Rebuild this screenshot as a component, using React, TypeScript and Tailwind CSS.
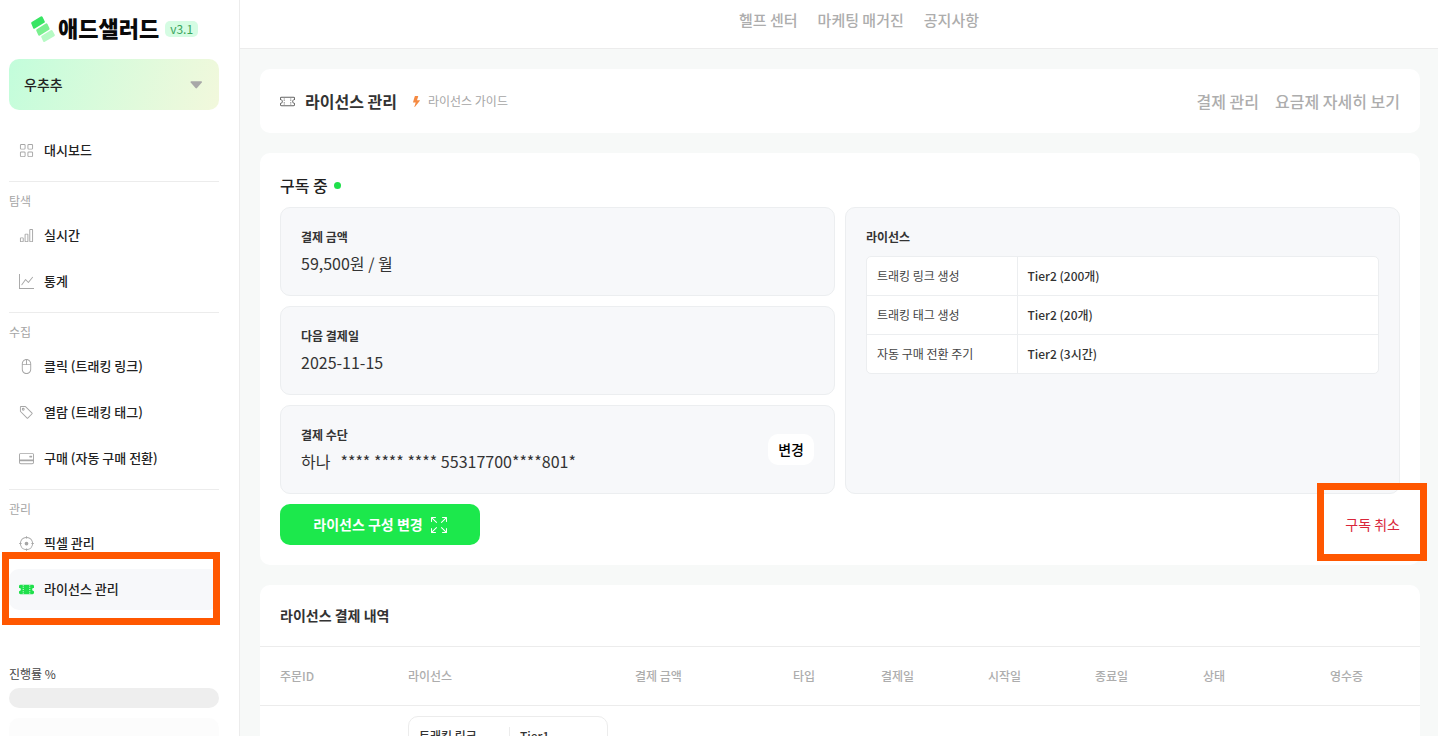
import type { ReactNode } from "react";
import {
  BsArrowsFullscreen,
  BsBarChart,
  BsCreditCard2Back,
  BsCrosshair,
  BsGraphUp,
  BsGrid,
  BsLightningFill,
  BsMouse2,
  BsTag,
  BsTicketPerforated,
  BsTicketPerforatedFill,
} from "react-icons/bs";

function LogoMark() {
  return (
    <svg width="24" height="26" viewBox="0 0 24 26" strokeWidth="2.4" strokeLinejoin="round" aria-hidden="true">
      <path d="M1.4 7 10.4 1.4 12.6 5.8 3.2 11.6Z" fill="#38e563" stroke="#38e563" />
      <path d="M6.4 14.2 15.4 8.6 17.4 12.8 8.2 18.4Z" fill="#7af08f" stroke="#7af08f" />
      <path d="M11.4 20.8 20.4 15.2 22.6 19.2 13.2 24.8Z" fill="#b6fac4" stroke="#b6fac4" />
    </svg>
  );
}

type NavItemProps = { icon: ReactNode; label: string; active?: boolean; marked?: boolean };

function NavItem({ icon, label, active, marked }: NavItemProps) {
  return (
    <li className="relative">
      <a
        href="#"
        className={
          active
            ? "flex h-[41px] items-center gap-[10px] rounded-[10px] bg-[#f7f8fa] px-[10px] text-[#1fe04b]"
            : "flex h-[41px] items-center gap-[10px] rounded-[10px] px-[10px] text-[#a6a6a6]"
        }
      >
        {icon}
        <span className="pb-0.5 text-[13px] font-medium text-[#222222]">{label}</span>
      </a>
      {marked && (
        <span className="pointer-events-none absolute -top-[17px] -right-px -bottom-[15px] -left-[7px] border-7 border-[#ff5700]" />
      )}
    </li>
  );
}

function NavSection({ title, children }: { title: string; children: ReactNode }) {
  return (
    <section className="mt-[10px] border-t border-[#ececec] pt-[9px]">
      <h2 className="mb-1 text-xs leading-5 text-[#a6a6a6]">{title}</h2>
      <ul className="flex flex-col gap-[5px]">{children}</ul>
    </section>
  );
}

function Sidebar() {
  return (
    <aside className="w-60 shrink-0 border-r border-[#ececec] bg-white pr-5 pl-[9px]">
      <a href="#" className="flex h-[59px] items-center pb-0.5 pl-[22px]">
        <LogoMark />
        <span className="ml-[3px] pb-1 text-[22px] leading-8 font-black text-[#0a0a0a]">애드샐러드</span>
        <span className="ml-[6px] rounded-[5px] bg-[#d5fce3] px-[5px] text-xs leading-4 text-[#3ba55c]">v3.1</span>
      </a>
      <button
        type="button"
        className="flex h-[51px] w-full items-center justify-between rounded-[10px] bg-linear-110 from-[#c2fddb] to-[#f2f8dc] px-[15px] text-sm font-medium text-[#222222]"
      >
        <span className="pb-0.5">우추추</span>
        <svg width="13" height="8" viewBox="0 0 13 8" className="mr-px" aria-hidden="true">
          <path d="M1.2 0.3h10.1q1.2 0.2 0.5 1.3L7 7.1q-0.8 0.7-1.5 0L0.7 1.6Q0 0.5 1.2 0.3Z" fill="#a8a8a8" />
        </svg>
      </button>
      <nav className="pt-5">
        <ul>
          <NavItem icon={<BsGrid size={15} />} label="대시보드" />
        </ul>
        <NavSection title="탐색">
          <NavItem icon={<BsBarChart size={15} />} label="실시간" />
          <NavItem icon={<BsGraphUp size={15} />} label="통계" />
        </NavSection>
        <NavSection title="수집">
          <NavItem icon={<BsMouse2 size={15} />} label="클릭 (트래킹 링크)" />
          <NavItem icon={<BsTag size={15} />} label="열람 (트래킹 태그)" />
          <NavItem icon={<BsCreditCard2Back size={15} />} label="구매 (자동 구매 전환)" />
        </NavSection>
        <NavSection title="관리">
          <NavItem icon={<BsCrosshair size={15} />} label="픽셀 관리" />
          <NavItem icon={<BsTicketPerforatedFill size={15} />} label="라이선스 관리" active marked />
        </NavSection>
      </nav>
      <div className="mt-[54px]">
        <p className="text-xs leading-5 text-[#444444]">진행률 %</p>
        <div className="mt-1 h-5 rounded-full bg-[#eeeeee]" />
        <div className="mt-[10px] h-12 rounded-[10px] bg-[#fcfcfc]" />
      </div>
    </aside>
  );
}

function InfoBox({ label, children, action }: { label: string; children: ReactNode; action?: ReactNode }) {
  return (
    <div className="flex items-center justify-between rounded-[10px] border border-[#eceef0] bg-[#f7f8fa] p-5">
      <div>
        <h3 className="text-xs leading-[18px] font-bold text-[#333333]">{label}</h3>
        <p className="mt-[5px] text-base leading-6 text-[#333333]">{children}</p>
      </div>
      {action}
    </div>
  );
}

const licenses = [
  { name: "트래킹 링크 생성", tier: "Tier2 (200개)" },
  { name: "트래킹 태그 생성", tier: "Tier2 (20개)" },
  { name: "자동 구매 전환 주기", tier: "Tier2 (3시간)" },
];

function LicenseTable() {
  return (
    <div className="mt-[10px] overflow-hidden rounded-[5px] border border-[#eceef0] bg-white">
      <table className="w-full text-left text-xs leading-[18px] font-medium">
        <tbody>
          {licenses.map((row) => (
            <tr key={row.name} className="border-b border-[#eceef0] last:border-b-0">
              <th scope="row" className="w-[150px] border-r border-[#eceef0] px-[10px] py-[10px] font-normal text-[#444444]">
                {row.name}
              </th>
              <td className="px-[10px] text-[#333333]">{row.tier}</td>
            </tr>
          ))}
        </tbody>
      </table>
    </div>
  );
}

function Subscription() {
  return (
    <section className="rounded-[10px] bg-white p-5">
      <h2 className="mb-[10px] flex items-center gap-[6px] text-base leading-6 font-medium text-[#222222]">
        구독 중
        <span className="size-[7px] rounded-full bg-[#1fe04b]" />
      </h2>
      <div className="grid grid-cols-2 gap-[10px]">
        <div className="flex flex-col gap-[10px]">
          <InfoBox label="결제 금액">59,500원 / 월</InfoBox>
          <InfoBox label="다음 결제일">2025-11-15</InfoBox>
          <InfoBox
            label="결제 수단"
            action={
              <button type="button" className="h-[31px] rounded-[10px] bg-white px-[10px] pb-0.5 text-sm font-medium text-black">
                변경
              </button>
            }
          >
            <span className="mr-[10px]">하나</span>
            <span>**** **** **** 55317700****801*</span>
          </InfoBox>
        </div>
        <div className="rounded-[10px] border border-[#eceef0] bg-[#f7f8fa] p-5">
          <h3 className="text-xs leading-[18px] font-bold text-[#333333]">라이선스</h3>
          <LicenseTable />
        </div>
      </div>
      <div className="mt-[10px] flex items-center justify-between">
        <button
          type="button"
          className="flex h-[41px] w-[200px] items-center justify-center gap-2 rounded-[10px] bg-[#1ce84c] text-sm font-bold text-white"
        >
          <span className="pb-0.5">라이선스 구성 변경</span>
          <BsArrowsFullscreen size={16} />
        </button>
        <div className="relative flex h-[41px] items-center">
          <button type="button" className="pb-0.5 text-sm text-[#d9263a]">
            구독 취소
          </button>
          <span className="pointer-events-none absolute -top-[21px] -right-[27px] -bottom-4 -left-7 border-7 border-[#ff5700]" />
        </div>
      </div>
    </section>
  );
}

const columns = [
  { title: "주문ID", style: "w-[148px]" },
  { title: "라이선스", style: "w-[227px]" },
  { title: "결제 금액", style: "w-[158px]" },
  { title: "타입", style: "w-[88px]" },
  { title: "결제일", style: "w-[107px]" },
  { title: "시작일", style: "w-[107px]" },
  { title: "종료일", style: "w-[108px]" },
  { title: "상태", style: "w-[127px]" },
  { title: "영수증", style: "w-[90px]" },
];

function PaymentHistory() {
  return (
    <section className="rounded-t-[10px] bg-white">
      <h2 className="px-5 py-5 text-sm leading-[21px] font-bold text-[#333333]">라이선스 결제 내역</h2>
      <table className="w-full table-fixed border-t border-[#ececec] text-left text-xs">
        <thead>
          <tr className="h-[59px] border-b border-[#ececec]">
            {columns.map((column) => (
              <th key={column.title} scope="col" className={`${column.style} font-medium text-[#adadad] first:pl-5`}>
                {column.title}
              </th>
            ))}
          </tr>
        </thead>
        <tbody>
          <tr>
            <td />
            <td className="py-[10px]">
              <dl className="flex w-[200px] rounded-[10px] border border-[#ececec] px-[10px] py-[10px] leading-[18px] font-medium text-[#333333]">
                <dt className="w-[91px] border-r border-[#ececec]">트래킹 링크</dt>
                <dd className="pl-[10px]">Tier1</dd>
              </dl>
            </td>
            <td colSpan={7} />
          </tr>
        </tbody>
      </table>
    </section>
  );
}

export default function App() {
  return (
    <div className="flex h-screen overflow-hidden bg-[#f7f9f8] font-['Noto_Sans_CJK_KR',sans-serif]">
      <Sidebar />
      <div className="min-w-0 flex-1">
        <header className="border-b border-[#ececec] bg-white pb-2 pl-10">
          <nav className="flex h-10 items-center justify-center gap-5 text-[15px] font-medium text-[#adadad]">
            <a href="#">헬프 센터</a>
            <a href="#">마케팅 매거진</a>
            <a href="#">공지사항</a>
          </nav>
        </header>
        <main className="flex flex-col gap-5 py-5 pr-[18px] pl-5">
          <div className="flex h-16 items-center justify-between rounded-[10px] bg-white px-5">
            <div className="flex items-center text-[#333333]">
              <BsTicketPerforated size={15} className="text-[#666666]" />
              <h1 className="ml-[10px] text-base font-bold">라이선스 관리</h1>
              <a href="#" className="ml-[14px] flex items-center gap-[6px] text-xs text-[#a6a6a6]">
                <BsLightningFill size={11} className="text-[#f58a42]" />
                라이선스 가이드
              </a>
            </div>
            <div className="flex gap-4 text-base font-medium text-[#adadad]">
              <a href="#">결제 관리</a>
              <a href="#">요금제 자세히 보기</a>
            </div>
          </div>
          <Subscription />
          <PaymentHistory />
        </main>
      </div>
    </div>
  );
}
